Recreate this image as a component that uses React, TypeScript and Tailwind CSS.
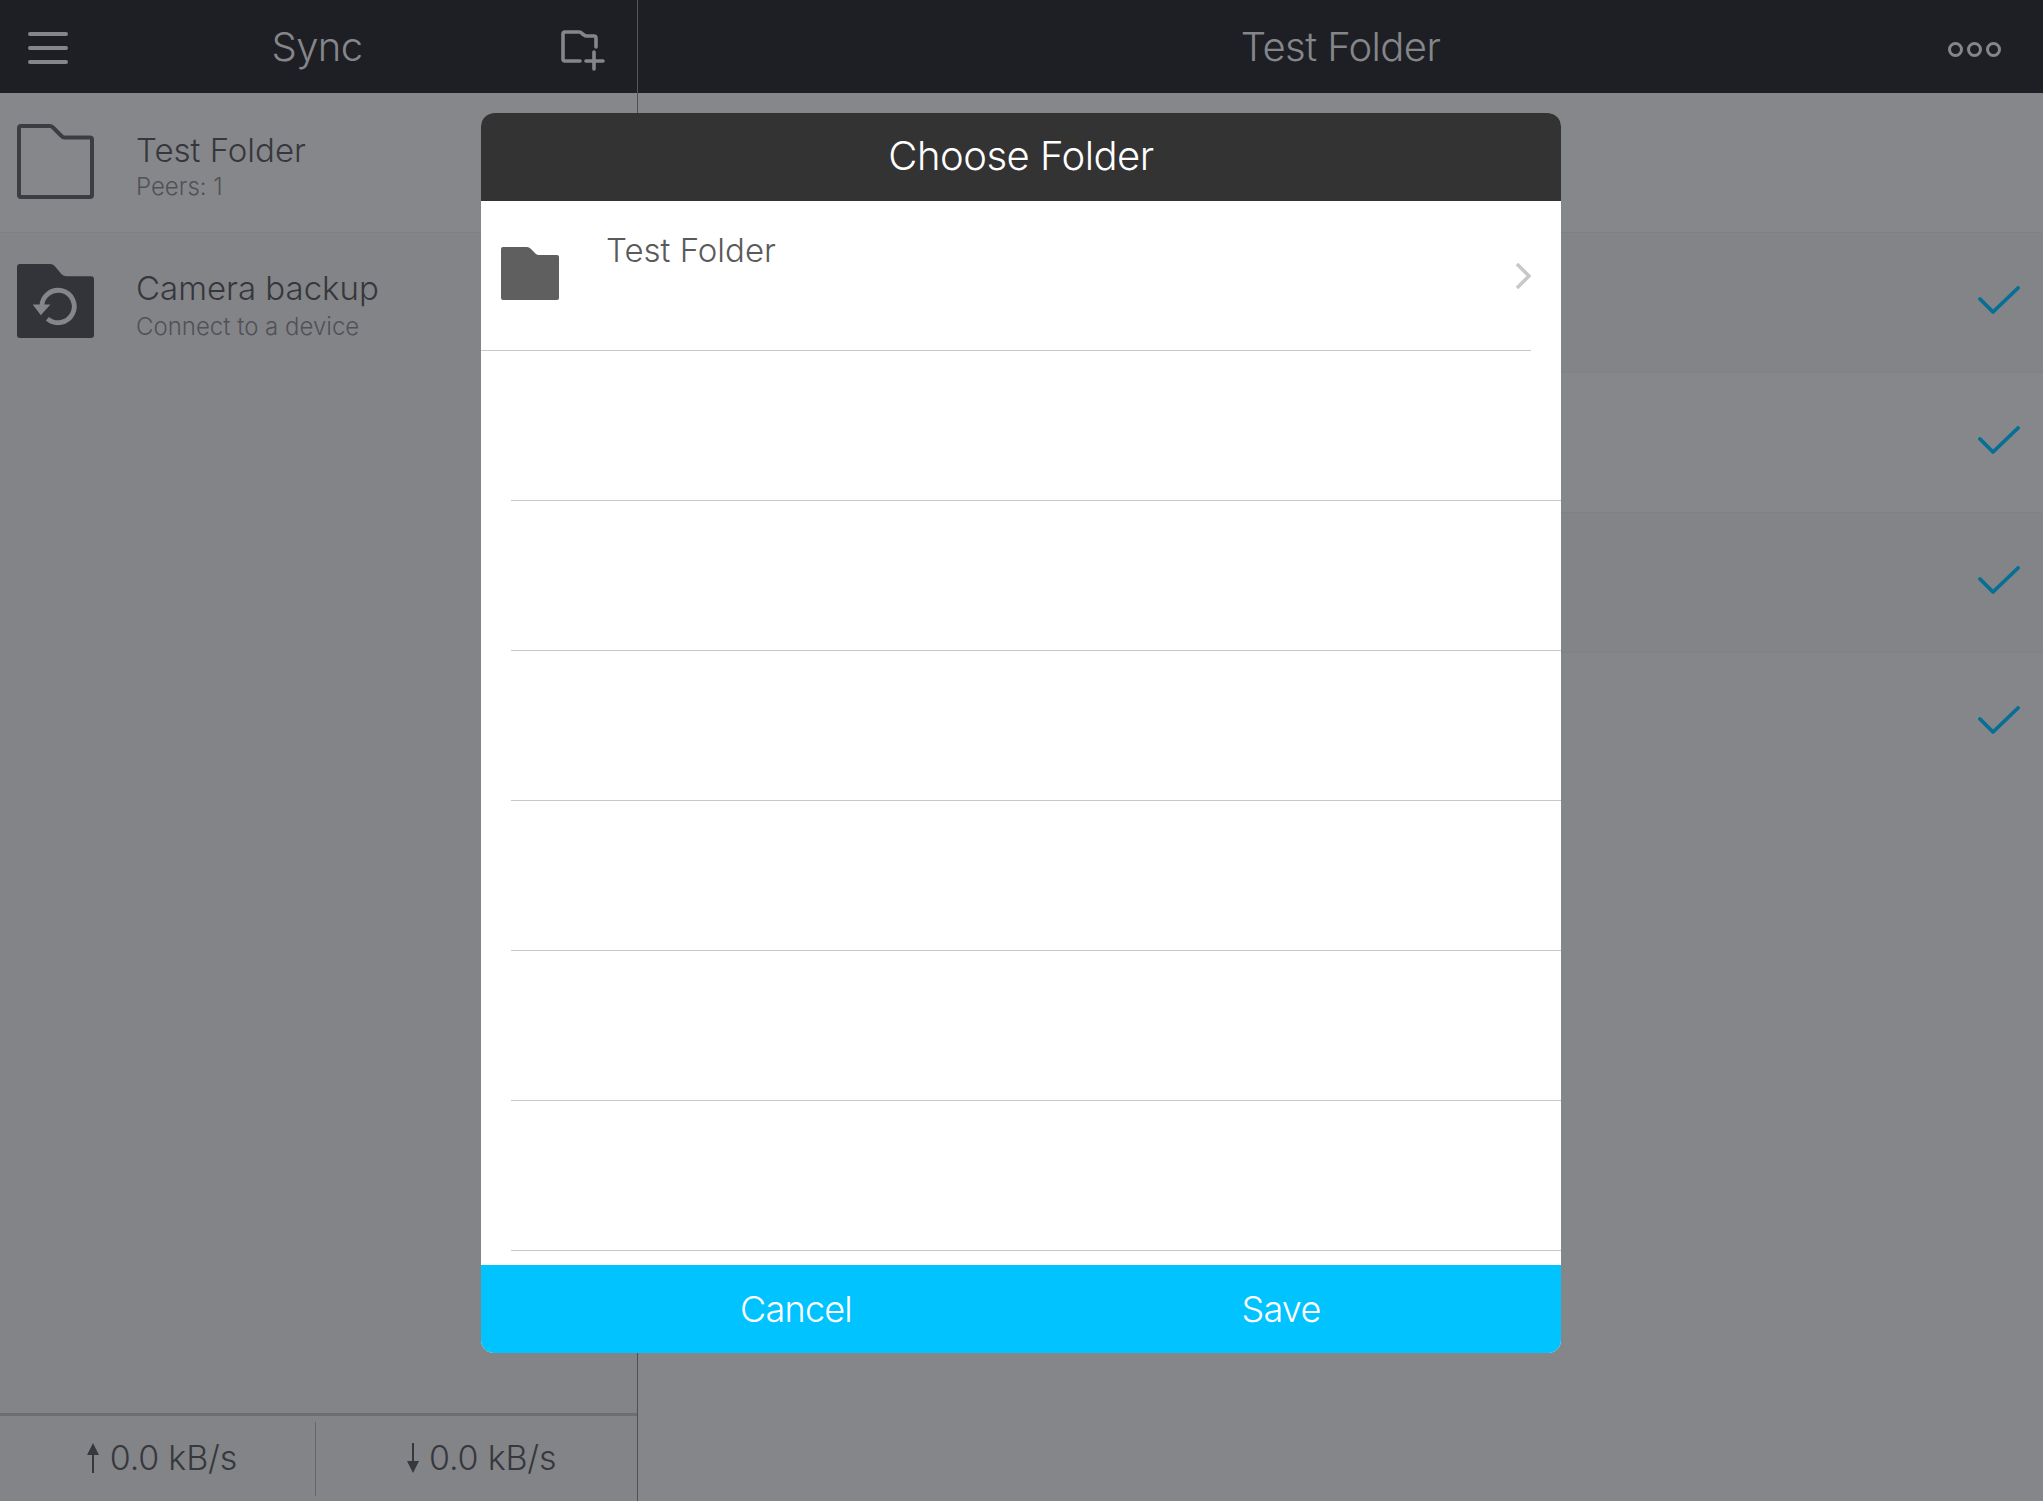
const Check = () => (
  <svg width="42" height="30" viewBox="0 0 42 30" fill="none" stroke="#066f96" strokeWidth="3.8" strokeLinecap="round" strokeLinejoin="round">
    <path d="M2 13 L15 26 L40 2" />
  </svg>
);

const Up = () => (
  <svg width="14" height="32" viewBox="0 0 14 32" className="shrink-0">
    <path d="M7 1 L13 13 H8 V31 H6 V13 H1 Z" fill="#37383d" />
  </svg>
);

const Down = () => (
  <svg width="14" height="32" viewBox="0 0 14 32" className="shrink-0">
    <path d="M6 1 H8 V19 H13 L7 31 L1 19 H6 Z" fill="#37383d" />
  </svg>
);

function SideRow({ cls, titleCls, subCls, icon, title, sub }: { cls: string; titleCls: string; subCls: string; icon: React.ReactNode; title: string; sub: string }) {
  return (
    <div className={`flex h-[140px] pl-[17px] ${cls}`}>
      {icon}
      <div className="ml-[42px] flex flex-col">
        <span className={`text-[33px] leading-[40px] text-[#36373c] ${titleCls}`}>{title}</span>
        <span className={`text-[24px] leading-[30px] text-[#505156] ${subCls}`}>{sub}</span>
      </div>
    </div>
  );
}

export default function App() {
  return (
    <div className="relative flex h-[1501px] w-[2043px] flex-col overflow-hidden bg-[#85868a] font-['Inter','Liberation_Sans',sans-serif] font-light">
      <header className="flex h-[93px] shrink-0 bg-[#1e1f24] text-[40px] tracking-[-0.6px] text-[#85868a]">
        <div className="flex w-[638px] items-center justify-between border-r border-[#55565a] pl-[28px] pr-[29px]">
          <div className="mt-[2px] flex w-[40px] flex-col gap-[10px]">
            <span className="h-[4px] rounded-full bg-[#85868a]" />
            <span className="h-[4px] rounded-full bg-[#85868a]" />
            <span className="h-[4px] rounded-full bg-[#85868a]" />
          </div>
          <span className="ml-[8px]">Sync</span>
          <svg width="50" height="46" viewBox="0 0 50 46" fill="none" stroke="#85868a" strokeWidth="3.6" strokeLinecap="round" strokeLinejoin="round" className="mt-[7px]">
            <path d="M22 34 H7 Q5 34 5 32 V7 Q5 5 7 5 H21 Q23 5 24 6.5 L26 8 Q27 9 29 9 H36 Q38 9 38 11 V20" />
            <path d="M36 25 V42 M28 34 H45" />
          </svg>
        </div>
        <div className="flex flex-1 items-center pr-[41px]">
          <span className="flex-1 pl-[96px] text-center">Test Folder</span>
          <svg width="55" height="17" viewBox="0 0 55 17" fill="none" stroke="#85868a" strokeWidth="3" className="mt-[5px]">
            <circle cx="8.5" cy="8.5" r="6" />
            <circle cx="27.5" cy="8.5" r="6" />
            <circle cx="46.5" cy="8.5" r="6" />
          </svg>
        </div>
      </header>

      <div className="flex flex-1">
        <aside className="flex w-[638px] flex-col border-r border-[#4f5054] bg-[#838488]">
          <SideRow
            cls="border-b border-[#7f8084] bg-[#86878b]"
            titleCls="mt-[37px]"
            subCls="mt-[2px]"
            title="Test Folder"
            sub="Peers: 1"
            icon={
              <svg width="77" height="75" viewBox="0 0 77 75" fill="none" stroke="#3c3d42" strokeWidth="4" className="mt-[31px] shrink-0">
                <path d="M4 2 H33 Q35 2 36.5 4 L44 11.5 Q45.5 13.5 48 13.5 H73 Q75 13.5 75 15.5 V71 Q75 73 73 73 H4 Q2 73 2 71 V4 Q2 2 4 2 Z" />
              </svg>
            }
          />
          <SideRow
            cls="bg-[#838488]"
            titleCls="mt-[35px]"
            subCls="mt-[4px]"
            title="Camera backup"
            sub="Connect to a device"
            icon={
              <svg width="77" height="74" viewBox="0 0 76 73" className="mt-[31px] shrink-0">
                <path d="M3 0 H33 Q36 0 38 3 L44 10 Q46 12 49 12 H73 Q76 12 76 15 V70 Q76 73 73 73 H3 Q0 73 0 70 V3 Q0 0 3 0 Z" fill="#333439" />
                <path d="M24.5 42 A16 16 0 1 1 30 54" fill="none" stroke="#85868a" strokeWidth="4.8" />
                <path d="M15.5 40 L33 40 L23.5 50.5 Z" fill="#85868a" />
              </svg>
            }
          />
          <div className="flex-1" />
          <div className="flex h-[88px] border-t-[3px] border-[#6d6e72] text-[34px] tracking-[-0.2px] text-[#37383d]">
            <div className="flex w-[315px] items-center justify-end pb-[2px] pr-[78px]">
              <Up />
              <span className="ml-[10px] leading-none">0.0 kB/s</span>
            </div>
            <div className="mt-[6px] mb-[5px] w-px bg-[#66676b]" />
            <div className="flex flex-1 items-center pb-[2px] pl-[90px]">
              <Down />
              <span className="ml-[9px] leading-none">0.0 kB/s</span>
            </div>
          </div>
        </aside>

        <main className="flex flex-1 flex-col">
          <div className="h-[140px] border-b border-[#7f8084] bg-[#86878b]" />
          {["bg-[#838488] border-b border-[#808185]", "bg-[#86878b] border-b border-[#808185]", "bg-[#838488] border-b border-[#808185]", "bg-[#85868a]"].map((cls, i) => (
            <div key={i} className={`flex h-[140px] items-center justify-end pb-[4px] pr-[23px] ${cls}`}>
              <Check />
            </div>
          ))}
        </main>
      </div>

      <div className="absolute left-[481px] top-[113px] flex h-[1240px] w-[1080px] flex-col overflow-hidden rounded-[13px] bg-white">
        <div className="flex h-[88px] shrink-0 items-center justify-center bg-[#333333] pb-[2px] text-[40px] tracking-[-0.5px] text-white">Choose Folder</div>
        <div className="flex-1">
          <div className="mr-[30px] flex h-[150px] items-center border-b border-[#c8c8cc] pl-[20px]">
            <svg width="58" height="53" viewBox="0 0 58 53" className="mb-[4px] shrink-0">
              <path d="M2 0 H26 Q28 0 30 2 L35 7 Q36 8 38 8 H56 Q58 8 58 10 V51 Q58 53 56 53 H2 Q0 53 0 51 V2 Q0 0 2 0 Z" fill="#5f5f5f" />
            </svg>
            <span className="mb-[80px] ml-[47px] self-end text-[33px] leading-[40px] text-[#5a5a5a]">Test Folder</span>
            <svg width="16" height="26" viewBox="0 0 16 26" fill="none" stroke="#c8c8c8" strokeWidth="3.6" className="ml-auto shrink-0">
              <path d="M2 1 L14 13 L2 25" />
            </svg>
          </div>
          {[0, 1, 2, 3, 4, 5].map((i) => (
            <div key={i} className="ml-[30px] h-[150px] border-b border-[#c8c8cc]" />
          ))}
        </div>
        <div className="flex h-[88px] shrink-0 items-center bg-[#00c3ff] text-[36px] tracking-[-0.8px] text-white">
          <span className="w-[630px] text-center">Cancel</span>
          <span className="w-[340px] text-center">Save</span>
        </div>
      </div>
    </div>
  );
}
